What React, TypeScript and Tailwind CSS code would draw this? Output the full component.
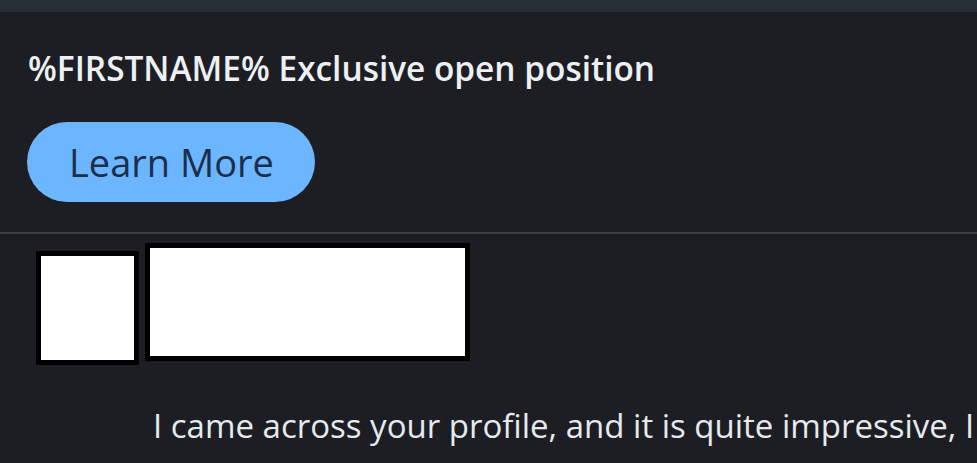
const App = () => {
  return (
    <div className="w-[977px] h-[463px] overflow-hidden bg-[#1c1e23] font-['Open_Sans',sans-serif]">
      <div className="h-3 bg-[#272e36]" />
      <div className="px-7 pt-[34px] pb-[30px] border-b-2 border-[#3a3e44]">
        <h1 className="text-[33.4px] leading-[44px] font-semibold text-[#edf0f3] whitespace-nowrap">
          %FIRSTNAME% Exclusive open position
        </h1>
        <button className="mt-[32px] ml-[-1px] w-[288px] h-[80px] rounded-full bg-[#6cb6ff] text-[#1b2f4c] text-[38px] font-medium text-left pl-[42px]">
          Learn More
        </button>
      </div>
      <div className="flex items-start gap-[6px] pl-9 pt-[9px]">
        <div className="mt-2 w-[103px] h-[114px] bg-white border-[5px] border-black" />
        <div className="w-[325px] h-[118px] bg-white border-[5px] border-black" />
      </div>
      <p className="pl-[153px] mt-[41px] text-[33px] leading-[40px] text-[#e6eaee] whitespace-nowrap">
        I came across your profile, and it is quite impressive, I would like to discuss a role with you
      </p>
    </div>
  );
};

export default App;
